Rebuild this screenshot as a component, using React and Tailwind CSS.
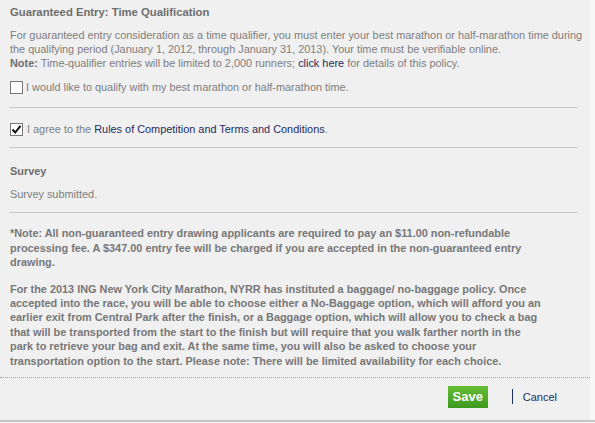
import React from 'react';

const font = { fontFamily: '"Liberation Sans", Arial, sans-serif' };

const Box = ({ checked }) => (
  <span className="inline-flex items-center justify-center w-[13px] h-[13px] border border-[#777] bg-white shrink-0">
    {checked && (
      <svg width="11" height="11" viewBox="0 0 11 11">
        <path d="M1.5 5.5 L4.2 8.5 L9.5 1.8" fill="none" stroke="#111" strokeWidth="2" />
      </svg>
    )}
  </span>
);

const Rule = () => <div className="h-px bg-[#c8c8c8] mr-[12px]" />;

export default function App() {
  return (
    <div className="w-[595px] h-[423px] bg-[#f7f7f7]" style={font}>
      <div className="w-[590px] h-[420px] bg-[#f0f0f0] pl-[10px] text-[10.9px] text-[#7e7e7e] whitespace-nowrap">
        <div className="pt-[4px] font-bold text-[11.3px] text-[#6e6e6e] leading-[16px]">Guaranteed Entry: Time Qualification</div>
        <p className="mt-[8px] leading-[14px]">
          For guaranteed entry consideration as a time qualifier, you must enter your best marathon or half-marathon time during
          <br />
          the qualifying period (January 1, 2012, through January 31, 2013). Your time must be verifiable online.
          <br />
          <b className="text-[#6e6e6e]">Note:</b> Time-qualifier entries will be limited to 2,000 runners;{' '}
          <span className="text-[#1f2d60]">click here</span> for details of this policy.
        </p>
        <div className="mt-[10px] flex items-center gap-[3px] leading-[14px]">
          <Box />
          <span>I would like to qualify with my best marathon or half-marathon time.</span>
        </div>
        <div className="mt-[13px]"><Rule /></div>
        <div className="mt-[14px] flex items-center gap-[4px] leading-[14px]">
          <Box checked />
          <span>
            I agree to the <span className="text-[#1f2d60]">Rules of Competition and Terms and Conditions</span>.
          </span>
        </div>
        <div className="mt-[11px]"><Rule /></div>
        <div className="mt-[15px] font-bold text-[#6e6e6e] leading-[16px]">Survey</div>
        <div className="mt-[8px] leading-[14px]">Survey submitted.</div>
        <div className="mt-[11px]"><Rule /></div>
        <p className="mt-[13px] font-bold leading-[14.5px] text-[#777]">
          *Note: All non-guaranteed entry drawing applicants are required to pay an $11.00 non-refundable
          <br />
          processing fee. A $347.00 entry fee will be charged if you are accepted in the non-guaranteed entry
          <br />
          drawing.
        </p>
        <p className="mt-[12px] font-bold leading-[14.4px] text-[#777]">
          For the 2013 ING New York City Marathon, NYRR has instituted a baggage/ no-baggage policy. Once
          <br />
          accepted into the race, you will be able to choose either a No-Baggage option, which will afford you an
          <br />
          earlier exit from Central Park after the finish, or a Baggage option, which will allow you to check a bag
          <br />
          that will be transported from the start to the finish but will require that you walk farther north in the
          <br />
          park to retrieve your bag and exit. At the same time, you will also be asked to choose your
          <br />
          transportation option to the start. Please note: There will be limited availability for each choice.
        </p>
        <div className="mt-[9px] -ml-[10px] border-t border-dotted border-[#a0a0a0]" />
        <div className="mt-[8px] flex items-center justify-end pr-[33px]">
          <button className="w-[40px] h-[22px] bg-gradient-to-b from-[#66bd36] to-[#3c9a1d] text-white font-bold text-[13px]">
            Save
          </button>
          <span className="ml-[24px] w-px h-[15px] bg-[#1f2d60]" />
          <span className="ml-[10px] text-[#1f2d60] text-[11px]">Cancel</span>
        </div>
      </div>
      <div className="h-[2px] bg-[#c4c4c4]" />
    </div>
  );
}
